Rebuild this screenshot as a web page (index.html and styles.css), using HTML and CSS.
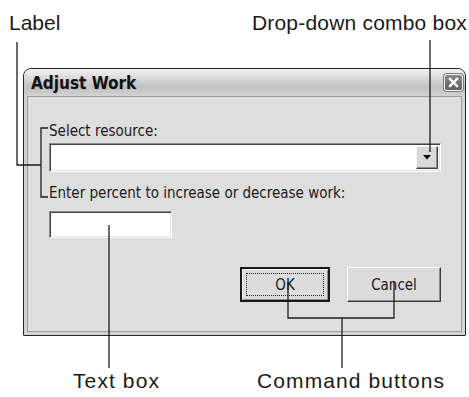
FILE: index.html
```html
<!DOCTYPE html>
<html lang="en">
  <head>
    <meta charset="UTF-8" />
    <title>Adjust Work</title>
    <link rel="stylesheet" href="styles.css">
  </head>
  <body>
    <div class="page">
      <!-- callout captions above the dialog -->
      <div class="captions top">
        <span>Label</span>
        <span>Drop-down combo box</span>
      </div>

      <div class="window">
        <div class="titlebar">
          <span class="title">Adjust Work</span>
          <span class="close">
            <svg width="11" height="11" viewBox="0 0 11 11">
              <path d="M2 2 L9 9 M9 2 L2 9" stroke="#fff" stroke-width="2.4" stroke-linecap="square" />
            </svg>
          </span>
        </div>
        <div class="frame">
          <div class="client">
            <div class="field-label">Select resource:</div>
            <div class="combo">
              <div class="combo-btn">
                <svg width="8" height="5" viewBox="0 0 8 5"><path d="M0 0 H8 L4 4.5 Z" fill="#000" /></svg>
              </div>
            </div>
            <div class="field-label second">Enter percent to increase or decrease work:</div>
            <div class="textbox"></div>
            <div class="buttons">
              <button class="btn default"><span class="focus">OK</span></button>
              <button class="btn cancel">Cancel</button>
            </div>
          </div>
        </div>
      </div>

      <div class="captions bottom">
        <span>Text box</span>
        <span>Command buttons</span>
      </div>

      <!-- leader lines from captions to controls -->
      <svg class="leaders" width="469" height="397" viewBox="0 0 469 397">
        <g fill="none" stroke="#1c1c1c" stroke-width="1.3">
          <path d="M17 42 V165 H41" />
          <path d="M48 128 H41 V197 H48" />
          <path d="M430 40 V152" />
          <path d="M109 225 V368" />
          <path d="M288 282 V318 H394 V282" />
          <path d="M342 318 V368" />
        </g>
      </svg>
    </div>
  </body>
</html>
```

FILE: styles.css
```css
body {
  margin: 0;
  background: #fff;
  color: #1a1a1a;
}

.page {
  position: relative;
  width: 469px;
  height: 397px;
  overflow: hidden;
}

/* Captions */
.captions {
  font-family: "Liberation Sans", Arial, sans-serif;
  font-size: 21px;
  line-height: 24px;
  color: #1a1a1a;
}

.captions.top {
  display: flex;
  justify-content: space-between;
  padding: 11px 2px 0 9px;
}

.captions.top span + span {
  letter-spacing: 0.2px;
}

.captions.bottom {
  display: grid;
  grid-template-columns: 184px auto;
  padding-left: 73px;
  margin-top: 33px;
  letter-spacing: 1.1px;
}

.leaders {
  position: absolute;
  left: 0;
  top: 0;
  pointer-events: none;
}

/* Dialog window */
.window {
  box-sizing: border-box;
  width: 443px;
  height: 268px;
  margin: 33px 0 0 23px;
  border: 1px solid #262626;
  border-radius: 8px 8px 1px 1px;
  background: #cfcfcf;
  overflow: hidden;
}

.titlebar {
  height: 27px;
  display: flex;
  align-items: center;
  justify-content: space-between;
  padding: 0 2px 0 7px;
  background: linear-gradient(#f2f2f2, #dcdcdc 30%, #c2c2c2 65%, #c9c9c9 85%, #d4d4d4);
}

.title {
  font-family: "DejaVu Sans Condensed", "DejaVu Sans", sans-serif;
  font-weight: bold;
  font-size: 17px;
  color: #111;
  text-shadow: 1px 1px 0 #b8b8b8;
}

.close {
  box-sizing: border-box;
  width: 19px;
  height: 17px;
  display: flex;
  align-items: center;
  justify-content: center;
  background: linear-gradient(#8a8a8a, #5e5e5e);
  border: 1px solid #f0f0f0;
  border-radius: 3px;
  box-shadow: 0 0 0 1px #7a7a7a;
}

.frame {
  padding: 0 3px 3px;
  background: #d2d2d2;
}

.client {
  box-sizing: border-box;
  height: 236px;
  border: 1px solid #9c9c9c;
  background: #dedede;
  padding: 25px 20px 0 21px;
  font-family: "DejaVu Sans Condensed", "DejaVu Sans", sans-serif;
  font-size: 15px;
  line-height: 18px;
  color: #1a1a1a;
}

.field-label.second {
  margin-top: 12px;
}

.combo,
.textbox {
  box-sizing: border-box;
  background: #fff;
  border: 1px solid;
  border-color: #8c8c8c #fbfbfb #fbfbfb #8c8c8c;
  box-shadow: inset 1px 1px 0 #444, inset -1px -1px 0 #e4e4e4;
}

.combo {
  height: 29px;
  margin-top: 3px;
  display: flex;
  justify-content: flex-end;
  padding: 2px 2px;
}

.combo-btn {
  box-sizing: border-box;
  width: 22px;
  height: 100%;
  display: flex;
  align-items: center;
  justify-content: center;
  background: #dadada;
  border: 1px solid;
  border-color: #f4f4f4 #404040 #404040 #f4f4f4;
  box-shadow: inset -1px -1px 0 #8c8c8c;
}

.textbox {
  width: 123px;
  height: 27px;
  margin-top: 9px;
}

/* Command buttons */
.buttons {
  display: flex;
  justify-content: flex-end;
  gap: 17px;
  margin-top: 29px;
}

.btn {
  box-sizing: border-box;
  height: 35px;
  padding: 0;
  font-family: "DejaVu Sans Condensed", "DejaVu Sans", sans-serif;
  font-size: 15px;
  color: #1a1a1a;
  background: #dcdcdc;
  border: 1px solid;
  border-color: #fafafa #3c3c3c #3c3c3c #fafafa;
  box-shadow: inset -1px -1px 0 #8e8e8e;
}

.btn.default {
  width: 90px;
  border: 2px solid #1a1a1a;
  box-shadow: inset 1px 1px 0 #fafafa, inset -1px -1px 0 #8e8e8e;
  display: flex;
  padding: 4px;
}

.btn.default .focus {
  flex: 1;
  display: flex;
  align-items: center;
  justify-content: center;
  border: 1px dotted #222;
}

.btn.cancel {
  width: 94px;
}
```
